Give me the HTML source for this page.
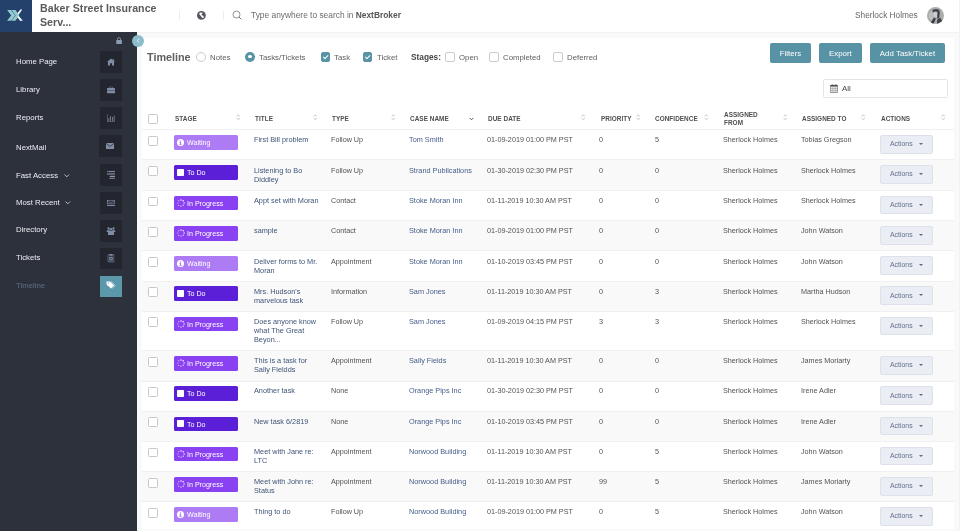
<!DOCTYPE html>
<html><head><meta charset="utf-8">
<style>
*{box-sizing:border-box;margin:0;padding:0}
html,body{width:960px;height:531px;overflow:hidden;background:#f9f9f9;font-family:"Liberation Sans",sans-serif;position:relative}
.abs{position:absolute}
.c,.nav,.lbl,.th,.btn,#brand,#search,#user,#tl,.badge span,.act span,#allbox span{will-change:transform}
#hdr{position:absolute;left:0;top:0;width:960px;height:33px;background:#fff;border-bottom:1px solid #f1f1f1}
#logo{position:absolute;left:0;top:0;width:32px;height:32px;background:#23416b}
#brand{position:absolute;left:40px;top:1.3px;font-weight:bold;font-size:10.6px;line-height:14px;color:#5a5a5a;letter-spacing:0.05px}
.sep{position:absolute;top:11px;width:1px;height:9px;background:#ededed}
#search{position:absolute;left:251px;top:10px;font-size:8.4px;color:#6b6b6b;line-height:11px}
#search b{color:#555}
#user{position:absolute;left:854.5px;top:10px;font-size:8.3px;color:#666;line-height:11px}
#avatar{position:absolute;left:926.9px;top:6.5px;width:17.4px;height:17.4px;border-radius:50%;overflow:hidden}
#avatar svg{display:block}
#side{position:absolute;left:0;top:32px;width:137px;height:499px;background:#2d313c}
.nav{position:absolute;left:15.6px;font-size:7.8px;color:#eceef2;line-height:10px}
.ibox{position:absolute;left:100px;width:22.2px;height:21.8px;background:#23262e}
.ibox svg{position:absolute;left:50%;top:50%;transform:translate(-50%,-50%)}
#card{position:absolute;left:142px;top:38px;width:812px;height:491px;background:#fff}
#tl{position:absolute;left:147px;top:50.8px;font-weight:bold;font-size:10.8px;color:#606060;line-height:13px}
.lbl{position:absolute;top:53px;font-size:7.8px;color:#5e5e5e;line-height:9px}
.radio{position:absolute;top:51.8px;width:10px;height:10px;border-radius:50%;border:0.8px solid #c9ccd1;background:#fff}
.radio.on{border:none;background:#5893a6}
.radio.on:after{content:"";position:absolute;left:3.3px;top:3.3px;width:3.4px;height:3.4px;border-radius:50%;background:#fff}
.chk{position:absolute;top:52px;width:9.6px;height:9.6px;border-radius:2px;border:0.8px solid #c9ccd1;background:#fff}
.chk.on{background:#5893a6;border-color:#5893a6}
.chk.on:after{content:"";position:absolute;left:2.6px;top:1.2px;width:2.2px;height:4.4px;border-right:1.3px solid #fff;border-bottom:1.3px solid #fff;transform:rotate(45deg)}
.btn{position:absolute;top:43.1px;height:19.6px;background:#5793a5;border-radius:2px;color:#fff;font-size:7.9px;line-height:21.6px;text-align:center}
#allbox{position:absolute;left:822.7px;top:79.3px;width:125.6px;height:19.1px;border:0.7px solid #e2e4e8;border-radius:1.5px;background:#fff}
#allbox span{position:absolute;left:18.8px;top:3.6px;font-size:7.9px;color:#444;line-height:9px}
.th{position:absolute;font-weight:bold;font-size:6.4px;letter-spacing:0.05px;color:#4e4e4e;line-height:8.4px}
.sort{position:absolute;top:114px}
#thline{position:absolute;left:142px;top:129px;width:812px;height:1px;background:#ebebeb}
.row{position:absolute;left:142px;width:812px;border-top:1px solid #f0f0f0}
.row .cb{position:absolute}
.cb{position:absolute;width:9.8px;height:9.8px;border:0.8px solid #c5c8cd;border-radius:1.5px;background:#fff}
.row .cb{left:6px !important}
.badge{position:absolute;left:32px;top:4.9px;width:64px;height:14.6px;border-radius:1.6px;color:#fff;font-size:7.1px;line-height:14.6px}
.badge svg{position:absolute;left:2.8px;top:3.8px}
.badge span{position:absolute;left:13.2px;top:0.9px}
.c{position:absolute;top:calc(5.6px + var(--dy));font-size:7.3px;line-height:9px;white-space:nowrap}
.title{color:#3e5478;top:calc(5.2px + var(--dy))}
.link{color:#445d8a;top:calc(5.2px + var(--dy))}
.typ{color:#525252;font-size:7.22px;top:calc(5.2px + var(--dy))}
.act{position:absolute;left:738px;top:4.8px;width:52.7px;height:18.6px;background:#eaedf4;border:0.8px solid #dde2ea;border-radius:2px}
.act span{position:absolute;left:8.5px;top:3.3px;font-size:6.9px;line-height:9px;color:#62718b}
.act i{position:absolute;left:37.8px;top:7px;width:0;height:0;border-left:2px solid transparent;border-right:2px solid transparent;border-top:2px solid #5a6a85}
</style></head><body>
<div id="hdr"></div>
<div id="logo"><svg width="32" height="32" viewBox="0 0 32 32">
<path d="M7.2 10.1 L11.2 10.1 L15.2 15.4 L11 20.7 L7 20.7 L11.2 15.4 Z" fill="#93c9d0"/>
<path d="M11.7 10.1 L15.5 10.1 L19.3 15.4 L15.3 20.7 L11.4 20.7 L15.6 15.4 Z" fill="#93c9d0"/>
<path d="M17.3 13.6 L20.4 9.6 L22.2 9.6 L18.6 14.8 Z" fill="#ffffff"/>
<path d="M17.4 17 L18.6 15.7 L22.8 20.7 L20 20.7 Z" fill="#ffffff"/>
</svg></div>
<div id="brand">Baker Street Insurance<br>Serv...</div>
<div class="sep" style="left:178.5px"></div>
<svg class="abs" style="left:196.9px;top:10.8px" width="8.8" height="8.8" viewBox="0 0 18 18"><circle cx="9" cy="9" r="9" fill="#55585e"/><path d="M4.6 4.2 Q8 2.2 11.6 3.8 L10 6.2 Q8.6 7.4 9.4 8.4 L13.2 10.2 Q15 12.6 12.6 14.8 L10.2 13.2 Q8 11.4 7.6 9.8 Q4.6 8.2 4.6 4.2 Z" fill="#fff"/></svg>
<div class="sep" style="left:222.5px"></div>
<svg class="abs" style="left:232.3px;top:10.3px" width="10.5" height="10.5" viewBox="0 0 21 21"><circle cx="9" cy="9" r="7" stroke="#6d7077" stroke-width="1.5" fill="none"/><path d="M14 14 L18.5 18.5" stroke="#6d7077" stroke-width="2"/></svg>
<div id="search">Type anywhere to search in <b>NextBroker</b></div>
<div id="user">Sherlock Holmes</div>
<div id="avatar"><svg width="17.4" height="17.4" viewBox="0 0 18 18"><rect width="18" height="18" fill="#acacac"/><path d="M2 7 Q4 3 8 2 L9 8 Q6 10 5 14 L2 12 Z" fill="#bdbdbd"/><path d="M5.5 3.2 Q9 1.2 12.8 3 L13.2 7.5 Q11.5 5.2 9.8 4.8 Q7.5 4.6 6.2 6.2 Z" fill="#40444c"/><path d="M6.8 6 Q8.5 4.8 10.4 5.6 L10.6 9.8 Q9 11.2 7.6 9.8 Z" fill="#cfcfcf"/><path d="M11 5.2 L13.2 6 L12.6 11.5 L10.8 12.4 L10.6 9.4 Z" fill="#3a3e46"/><path d="M3.5 16.5 L7.2 11.2 L9.2 12 L6.5 18 L3.5 18 Z" fill="#363a42"/><path d="M10.5 13.2 L13.5 11.2 L16.2 14.8 L12.5 18 L10.2 18 Z" fill="#3f434b"/></svg></div>

<div id="side">
</div>
<div class="nav" style="top:57px">Home Page</div>
<div class="nav" style="top:84.5px">Library</div>
<div class="nav" style="top:112.5px">Reports</div>
<div class="nav" style="top:142.8px">NextMail</div>
<div class="nav" style="top:170.5px">Fast Access</div><svg class="abs" style="left:64.2px;top:173.6px" width="5.5" height="3.6" viewBox="0 0 11 7"><path d="M1 1 L5.5 5.5 L10 1" stroke="#dfe2e8" stroke-width="1.6" fill="none"/></svg>
<div class="nav" style="top:198px">Most Recent</div><svg class="abs" style="left:65.4px;top:201.2px" width="5.5" height="3.6" viewBox="0 0 11 7"><path d="M1 1 L5.5 5.5 L10 1" stroke="#dfe2e8" stroke-width="1.6" fill="none"/></svg>
<div class="nav" style="top:225px">Directory</div>
<div class="nav" style="top:253px">Tickets</div>
<div class="nav" style="top:281px;color:#5f6e86">Timeline</div>
<div class="ibox" style="top:51.2px"><svg width="9" height="8" viewBox="0 0 18 16"><path d="M9 1 L17 8 L15 8 L15 15 L11 15 L11 10.5 L7 10.5 L7 15 L3 15 L3 8 L1 8 Z" fill="#7f8ca4"/><rect x="12.5" y="2" width="2" height="4" fill="#7f8ca4"/></svg></div>
<div class="ibox" style="top:79px"><svg width="9" height="7" viewBox="0 0 18 14"><rect x="1" y="3" width="16" height="11" rx="1.5" fill="#7f8ca4"/><rect x="6" y="0.5" width="6" height="3.5" rx="1" fill="none" stroke="#7f8ca4" stroke-width="1.2"/><rect x="1" y="7.5" width="16" height="0.8" fill="#23262e"/></svg></div>
<div class="ibox" style="top:107.2px"><svg width="9" height="8" viewBox="0 0 18 16"><rect x="1" y="1" width="1" height="14" fill="#7f8ca4"/><rect x="1" y="14" width="16" height="1" fill="#7f8ca4"/><rect x="4" y="8" width="1.6" height="6" fill="#7f8ca4"/><rect x="7.5" y="4" width="1.6" height="10" fill="#7f8ca4"/><rect x="11" y="6" width="1.6" height="8" fill="#7f8ca4"/><rect x="14.5" y="3" width="1.6" height="11" fill="#7f8ca4"/></svg></div>
<div class="ibox" style="top:135px;left:99.4px"><svg width="9" height="7" viewBox="0 0 18 14"><rect x="1" y="1" width="16" height="12" rx="1" fill="#7f8ca4"/><path d="M1.5 2 L9 8 L16.5 2" stroke="#23262e" stroke-width="1.4" fill="none"/></svg></div>
<div class="ibox" style="top:164px"><svg width="8" height="8.4" viewBox="0 0 16 17"><rect x="0" y="0" width="1.6" height="2.6" fill="#7f8ca4"/><rect x="2.6" y="0" width="13.4" height="2.6" fill="#7f8ca4"/><rect x="0" y="5.2" width="16" height="2.4" fill="#7f8ca4"/><rect x="5.6" y="10.2" width="10.4" height="2" fill="#9fb4d8"/><rect x="4.6" y="14.2" width="11.4" height="2" fill="#a9a793"/></svg></div>
<div class="ibox" style="top:192px"><svg width="8" height="6.2" viewBox="0 0 16 12.4"><rect x="0.7" y="0.7" width="14.6" height="7.2" fill="none" stroke="#7f8ca4" stroke-width="1.4"/><path d="M1 2 L8 6 L15 2" stroke="#7f8ca4" stroke-width="1.2" fill="none"/><rect x="0" y="10.2" width="16" height="2" fill="#7f8ca4"/></svg></div>
<div class="ibox" style="top:220px"><svg width="10" height="9" viewBox="0 0 20 18"><circle cx="5" cy="4" r="2.3" fill="#7f8ca4"/><circle cx="15" cy="4" r="2.3" fill="#7f8ca4"/><circle cx="10" cy="5.5" r="2.6" fill="#7f8ca4"/><path d="M1 11 Q1 7 5 7 Q8 7 8 9 L12 9 Q12 7 15 7 Q19 7 19 11 Z" fill="#7f8ca4"/><rect x="4" y="10" width="12" height="7" rx="1" fill="#7f8ca4"/></svg></div>
<div class="ibox" style="top:247.5px"><svg width="7.2" height="8.6" viewBox="0 0 14 17"><rect x="0.8" y="2.2" width="12.4" height="14" rx="1" fill="none" stroke="#7f8ca4" stroke-width="1.6"/><rect x="4" y="0.5" width="6" height="3.4" rx="0.8" fill="#7f8ca4"/><rect x="3.5" y="6" width="7" height="7.5" fill="#7f8ca4"/><rect x="5" y="8" width="4" height="3.5" fill="#50586a"/></svg></div>
<div class="ibox" style="top:275.5px;background:#5b98aa"><svg width="10" height="8" viewBox="0 0 20 16" style="margin-top:-1px"><path d="M1 1 L8 1 L16 9 L10 15 L1 7 Z" fill="#fff"/><circle cx="4.5" cy="4.2" r="1.3" fill="#5b98aa"/><path d="M10 1 L18.5 9 L12.5 15" stroke="#fff" stroke-width="1.2" fill="none"/></svg></div>
<svg class="abs" style="left:115.8px;top:36.8px" width="6.2" height="7.4" viewBox="0 0 12 14.4"><rect x="0.5" y="6" width="11" height="8" rx="0.8" fill="#8a99b6"/><path d="M3 6.2 V4.2 A3 3 0 0 1 9 4.2 V6.2" stroke="#9aa3b3" stroke-width="1.5" fill="none"/></svg>

<div id="card"></div>
<div class="abs" style="left:131.8px;top:34.9px;width:12.2px;height:12.2px;border-radius:50%;background:#8bbdcb"></div>
<svg class="abs" style="left:135.6px;top:38.4px" width="4.4" height="5.2" viewBox="0 0 8.8 10.4"><path d="M6.6 1.2 L2.4 5.2 L6.6 9.2" stroke="#eef5f7" stroke-width="1.8" fill="none"/></svg>
<div id="tl">Timeline</div>
<div class="radio" style="left:196px"></div><div class="lbl" style="left:210.3px">Notes</div>
<div class="radio on" style="left:245px"></div><div class="lbl" style="left:259.3px">Tasks/Tickets</div>
<div class="chk on" style="left:320.5px"></div><div class="lbl" style="left:334.3px">Task</div>
<div class="chk on" style="left:362.7px"></div><div class="lbl" style="left:376.7px">Ticket</div>
<div class="lbl" style="left:410.7px;top:52.6px;font-weight:bold;font-size:8.3px;color:#484848">Stages:</div>
<div class="chk" style="left:445px"></div><div class="lbl" style="left:458.7px">Open</div>
<div class="chk" style="left:489.3px"></div><div class="lbl" style="left:503.3px">Completed</div>
<div class="chk" style="left:553.3px"></div><div class="lbl" style="left:567.3px">Deferred</div>
<div class="btn" style="left:770px;width:40.8px">Filters</div>
<div class="btn" style="left:819.3px;width:42.7px">Export</div>
<div class="btn" style="left:870px;width:75px">Add Task/Ticket</div>
<div id="allbox"><svg class="abs" style="left:6.8px;top:4px" width="8" height="9" viewBox="0 0 16 18"><rect x="0.7" y="2.6" width="14.6" height="14.6" rx="1" fill="none" stroke="#3a3a40" stroke-width="1.1"/><rect x="0.7" y="2.4" width="14.6" height="2.6" fill="#3a3a40"/><path d="M4.4 5v12M8 5v12M11.6 5v12M1 8.8h14M1 12.8h14" stroke="#55555c" stroke-width="0.7"/><rect x="3.6" y="0.8" width="1.6" height="2.6" fill="#3a3a40"/><rect x="10.8" y="0.8" width="1.6" height="2.6" fill="#3a3a40"/></svg><span>All</span></div>

<div class="cb" style="left:148px;top:114px"></div>
<div class="th" style="left:175.4px;top:115px">STAGE</div><svg class="sort" style="left:235.9px" width="4.6" height="6.6" viewBox="0 0 10 14"><path d="M1.5 5.5 L5 1.5 L8.5 5.5" stroke="#aeb3ba" stroke-width="1.5" fill="none"/><path d="M1.5 8.5 L5 12.5 L8.5 8.5" stroke="#aeb3ba" stroke-width="1.5" fill="none"/></svg>
<div class="th" style="left:255px;top:115px">TITLE</div><svg class="sort" style="left:312.9px" width="4.6" height="6.6" viewBox="0 0 10 14"><path d="M1.5 5.5 L5 1.5 L8.5 5.5" stroke="#aeb3ba" stroke-width="1.5" fill="none"/><path d="M1.5 8.5 L5 12.5 L8.5 8.5" stroke="#aeb3ba" stroke-width="1.5" fill="none"/></svg>
<div class="th" style="left:332.2px;top:115px">TYPE</div><svg class="sort" style="left:390.9px" width="4.6" height="6.6" viewBox="0 0 10 14"><path d="M1.5 5.5 L5 1.5 L8.5 5.5" stroke="#aeb3ba" stroke-width="1.5" fill="none"/><path d="M1.5 8.5 L5 12.5 L8.5 8.5" stroke="#aeb3ba" stroke-width="1.5" fill="none"/></svg>
<div class="th" style="left:410px;top:115px">CASE NAME</div>
<svg class="abs" style="left:469px;top:116.6px" width="5" height="4" viewBox="0 0 10 8"><path d="M1.5 2 L5 5.5 L8.5 2" stroke="#4a4a4a" stroke-width="1.9" fill="none"/></svg>
<div class="th" style="left:487.9px;top:115px">DUE DATE</div><svg class="sort" style="left:580.9px" width="4.6" height="6.6" viewBox="0 0 10 14"><path d="M1.5 5.5 L5 1.5 L8.5 5.5" stroke="#aeb3ba" stroke-width="1.5" fill="none"/><path d="M1.5 8.5 L5 12.5 L8.5 8.5" stroke="#aeb3ba" stroke-width="1.5" fill="none"/></svg>
<div class="th" style="left:600.6px;top:115px">PRIORITY</div><svg class="sort" style="left:635.9px" width="4.6" height="6.6" viewBox="0 0 10 14"><path d="M1.5 5.5 L5 1.5 L8.5 5.5" stroke="#aeb3ba" stroke-width="1.5" fill="none"/><path d="M1.5 8.5 L5 12.5 L8.5 8.5" stroke="#aeb3ba" stroke-width="1.5" fill="none"/></svg>
<div class="th" style="left:655.4px;top:115px">CONFIDENCE</div><svg class="sort" style="left:703.9px" width="4.6" height="6.6" viewBox="0 0 10 14"><path d="M1.5 5.5 L5 1.5 L8.5 5.5" stroke="#aeb3ba" stroke-width="1.5" fill="none"/><path d="M1.5 8.5 L5 12.5 L8.5 8.5" stroke="#aeb3ba" stroke-width="1.5" fill="none"/></svg>
<div class="th" style="left:723.5px;top:111px">ASSIGNED<br>FROM</div><svg class="sort" style="left:782.9px" width="4.6" height="6.6" viewBox="0 0 10 14"><path d="M1.5 5.5 L5 1.5 L8.5 5.5" stroke="#aeb3ba" stroke-width="1.5" fill="none"/><path d="M1.5 8.5 L5 12.5 L8.5 8.5" stroke="#aeb3ba" stroke-width="1.5" fill="none"/></svg>
<div class="th" style="left:802px;top:115px">ASSIGNED TO</div><svg class="sort" style="left:861.4px" width="4.6" height="6.6" viewBox="0 0 10 14"><path d="M1.5 5.5 L5 1.5 L8.5 5.5" stroke="#aeb3ba" stroke-width="1.5" fill="none"/><path d="M1.5 8.5 L5 12.5 L8.5 8.5" stroke="#aeb3ba" stroke-width="1.5" fill="none"/></svg>
<div class="th" style="left:880.8px;top:115px">ACTIONS</div><svg class="sort" style="left:940.9px" width="4.6" height="6.6" viewBox="0 0 10 14"><path d="M1.5 5.5 L5 1.5 L8.5 5.5" stroke="#aeb3ba" stroke-width="1.5" fill="none"/><path d="M1.5 8.5 L5 12.5 L8.5 8.5" stroke="#aeb3ba" stroke-width="1.5" fill="none"/></svg>
<div id="thline"></div>
<div class="row" style="top:129.3px;height:30.099999999999994px;background:#ffffff;--dy:0px">
<div class="cb" style="left:148px;top:5.6px"></div>
<div class="badge" style="background:#ad7cf5"><svg width="7" height="7" viewBox="0 0 14 14"><circle cx="7" cy="7" r="7" fill="#fff"/><rect x="5.8" y="5.6" width="2.4" height="5.6" fill="#ad7cf5"/><circle cx="7" cy="3.6" r="1.3" fill="#ad7cf5"/><rect x="4.6" y="10" width="4.8" height="1.4" fill="#ad7cf5"/><rect x="4.6" y="5.6" width="2.8" height="1.2" fill="#ad7cf5"/></svg><span>Waiting</span></div>
<div class="c title" style="left:112px">First Bill problem</div>
<div class="c typ" style="left:189px">Follow Up</div>
<div class="c link" style="left:267px">Tom Smith</div>
<div class="c typ" style="left:345px">01-09-2019 01:00 PM PST</div>
<div class="c typ" style="left:457px">0</div>
<div class="c typ" style="left:513px">5</div>
<div class="c typ" style="left:580.5px">Sherlock Holmes</div>
<div class="c typ" style="left:659px">Tobias Gregson</div>
<div class="act"><span>Actions</span><i></i></div>
</div><div class="row" style="top:159.4px;height:30.599999999999994px;background:#f9f9f9;--dy:0px">
<div class="cb" style="left:148px;top:5.6px"></div>
<div class="badge" style="background:#5b1fd7"><svg width="7" height="7" viewBox="0 0 14 14"><rect x="0" y="0" width="14" height="14" rx="1.5" fill="#fff"/></svg><span>To Do</span></div>
<div class="c title" style="left:112px">Listening to Bo<br>Diddley</div>
<div class="c typ" style="left:189px">Follow Up</div>
<div class="c link" style="left:267px">Strand Publications</div>
<div class="c typ" style="left:345px">01-30-2019 02:30 PM PST</div>
<div class="c typ" style="left:457px">0</div>
<div class="c typ" style="left:513px">0</div>
<div class="c typ" style="left:580.5px">Sherlock Holmes</div>
<div class="c typ" style="left:659px">Sherlock Holmes</div>
<div class="act"><span>Actions</span><i></i></div>
</div><div class="row" style="top:190.0px;height:30.19999999999999px;background:#ffffff;--dy:0px">
<div class="cb" style="left:148px;top:5.6px"></div>
<div class="badge" style="background:#8a41f2"><svg width="8" height="8" viewBox="0 0 16 16" fill="#fff" style="top:3.2px;left:2.9px"><circle cx="8" cy="1.8" r="1.55"/><circle cx="12.4" cy="3.6" r="1.45"/><circle cx="14.2" cy="8" r="1.3"/><circle cx="12.4" cy="12.4" r="1.2"/><circle cx="8" cy="14.2" r="1.1"/><circle cx="3.6" cy="12.4" r="1.05"/><circle cx="1.8" cy="8" r="1"/><circle cx="3.6" cy="3.6" r="1.05"/></svg><span>In Progress</span></div>
<div class="c title" style="left:112px">Appt set with Moran</div>
<div class="c typ" style="left:189px">Contact</div>
<div class="c link" style="left:267px">Stoke Moran Inn</div>
<div class="c typ" style="left:345px">01-11-2019 10:30 AM PST</div>
<div class="c typ" style="left:457px">0</div>
<div class="c typ" style="left:513px">0</div>
<div class="c typ" style="left:580.5px">Sherlock Holmes</div>
<div class="c typ" style="left:659px">Sherlock Holmes</div>
<div class="act"><span>Actions</span><i></i></div>
</div><div class="row" style="top:220.2px;height:30.200000000000017px;background:#f9f9f9;--dy:0px">
<div class="cb" style="left:148px;top:5.6px"></div>
<div class="badge" style="background:#8a41f2"><svg width="8" height="8" viewBox="0 0 16 16" fill="#fff" style="top:3.2px;left:2.9px"><circle cx="8" cy="1.8" r="1.55"/><circle cx="12.4" cy="3.6" r="1.45"/><circle cx="14.2" cy="8" r="1.3"/><circle cx="12.4" cy="12.4" r="1.2"/><circle cx="8" cy="14.2" r="1.1"/><circle cx="3.6" cy="12.4" r="1.05"/><circle cx="1.8" cy="8" r="1"/><circle cx="3.6" cy="3.6" r="1.05"/></svg><span>In Progress</span></div>
<div class="c title" style="left:112px">sample</div>
<div class="c typ" style="left:189px">Contact</div>
<div class="c link" style="left:267px">Stoke Moran Inn</div>
<div class="c typ" style="left:345px">01-09-2019 01:00 PM PST</div>
<div class="c typ" style="left:457px">0</div>
<div class="c typ" style="left:513px">0</div>
<div class="c typ" style="left:580.5px">Sherlock Holmes</div>
<div class="c typ" style="left:659px">John Watson</div>
<div class="act"><span>Actions</span><i></i></div>
</div><div class="row" style="top:250.4px;height:30.200000000000017px;background:#ffffff;--dy:0px">
<div class="cb" style="left:148px;top:5.6px"></div>
<div class="badge" style="background:#ad7cf5"><svg width="7" height="7" viewBox="0 0 14 14"><circle cx="7" cy="7" r="7" fill="#fff"/><rect x="5.8" y="5.6" width="2.4" height="5.6" fill="#ad7cf5"/><circle cx="7" cy="3.6" r="1.3" fill="#ad7cf5"/><rect x="4.6" y="10" width="4.8" height="1.4" fill="#ad7cf5"/><rect x="4.6" y="5.6" width="2.8" height="1.2" fill="#ad7cf5"/></svg><span>Waiting</span></div>
<div class="c title" style="left:112px">Deliver forms to Mr.<br>Moran</div>
<div class="c typ" style="left:189px">Appointment</div>
<div class="c link" style="left:267px">Stoke Moran Inn</div>
<div class="c typ" style="left:345px">01-10-2019 03:45 PM PST</div>
<div class="c typ" style="left:457px">0</div>
<div class="c typ" style="left:513px">0</div>
<div class="c typ" style="left:580.5px">Sherlock Holmes</div>
<div class="c typ" style="left:659px">John Watson</div>
<div class="act"><span>Actions</span><i></i></div>
</div><div class="row" style="top:280.6px;height:30.19999999999999px;background:#f9f9f9;--dy:0px">
<div class="cb" style="left:148px;top:5.6px"></div>
<div class="badge" style="background:#5b1fd7"><svg width="7" height="7" viewBox="0 0 14 14"><rect x="0" y="0" width="14" height="14" rx="1.5" fill="#fff"/></svg><span>To Do</span></div>
<div class="c title" style="left:112px">Mrs. Hudson's<br>marvelous task</div>
<div class="c typ" style="left:189px">Information</div>
<div class="c link" style="left:267px">Sam Jones</div>
<div class="c typ" style="left:345px">01-11-2019 10:30 AM PST</div>
<div class="c typ" style="left:457px">0</div>
<div class="c typ" style="left:513px">3</div>
<div class="c typ" style="left:580.5px">Sherlock Holmes</div>
<div class="c typ" style="left:659px">Martha Hudson</div>
<div class="act"><span>Actions</span><i></i></div>
</div><div class="row" style="top:310.8px;height:39.599999999999966px;background:#ffffff;--dy:0px">
<div class="cb" style="left:148px;top:5.6px"></div>
<div class="badge" style="background:#8a41f2"><svg width="8" height="8" viewBox="0 0 16 16" fill="#fff" style="top:3.2px;left:2.9px"><circle cx="8" cy="1.8" r="1.55"/><circle cx="12.4" cy="3.6" r="1.45"/><circle cx="14.2" cy="8" r="1.3"/><circle cx="12.4" cy="12.4" r="1.2"/><circle cx="8" cy="14.2" r="1.1"/><circle cx="3.6" cy="12.4" r="1.05"/><circle cx="1.8" cy="8" r="1"/><circle cx="3.6" cy="3.6" r="1.05"/></svg><span>In Progress</span></div>
<div class="c title" style="left:112px">Does anyone know<br>what The Great<br>Beyon...</div>
<div class="c typ" style="left:189px">Follow Up</div>
<div class="c link" style="left:267px">Sam Jones</div>
<div class="c typ" style="left:345px">01-09-2019 04:15 PM PST</div>
<div class="c typ" style="left:457px">3</div>
<div class="c typ" style="left:513px">3</div>
<div class="c typ" style="left:580.5px">Sherlock Holmes</div>
<div class="c typ" style="left:659px">Sherlock Holmes</div>
<div class="act"><span>Actions</span><i></i></div>
</div><div class="row" style="top:350.4px;height:30.200000000000045px;background:#f9f9f9;--dy:-1px">
<div class="cb" style="left:148px;top:5.6px"></div>
<div class="badge" style="background:#8a41f2"><svg width="8" height="8" viewBox="0 0 16 16" fill="#fff" style="top:3.2px;left:2.9px"><circle cx="8" cy="1.8" r="1.55"/><circle cx="12.4" cy="3.6" r="1.45"/><circle cx="14.2" cy="8" r="1.3"/><circle cx="12.4" cy="12.4" r="1.2"/><circle cx="8" cy="14.2" r="1.1"/><circle cx="3.6" cy="12.4" r="1.05"/><circle cx="1.8" cy="8" r="1"/><circle cx="3.6" cy="3.6" r="1.05"/></svg><span>In Progress</span></div>
<div class="c title" style="left:112px">This is a task for<br>Sally Fieldds</div>
<div class="c typ" style="left:189px">Appointment</div>
<div class="c link" style="left:267px">Sally Fields</div>
<div class="c typ" style="left:345px">01-11-2019 10:30 AM PST</div>
<div class="c typ" style="left:457px">0</div>
<div class="c typ" style="left:513px">0</div>
<div class="c typ" style="left:580.5px">Sherlock Holmes</div>
<div class="c typ" style="left:659px">James Moriarty</div>
<div class="act"><span>Actions</span><i></i></div>
</div><div class="row" style="top:380.6px;height:30.19999999999999px;background:#ffffff;--dy:-0.6px">
<div class="cb" style="left:148px;top:5.6px"></div>
<div class="badge" style="background:#5b1fd7"><svg width="7" height="7" viewBox="0 0 14 14"><rect x="0" y="0" width="14" height="14" rx="1.5" fill="#fff"/></svg><span>To Do</span></div>
<div class="c title" style="left:112px">Another task</div>
<div class="c typ" style="left:189px">None</div>
<div class="c link" style="left:267px">Orange Pips Inc</div>
<div class="c typ" style="left:345px">01-30-2019 02:30 PM PST</div>
<div class="c typ" style="left:457px">0</div>
<div class="c typ" style="left:513px">0</div>
<div class="c typ" style="left:580.5px">Sherlock Holmes</div>
<div class="c typ" style="left:659px">Irene Adler</div>
<div class="act"><span>Actions</span><i></i></div>
</div><div class="row" style="top:410.8px;height:30.19999999999999px;background:#f9f9f9;--dy:0px">
<div class="cb" style="left:148px;top:5.6px"></div>
<div class="badge" style="background:#5b1fd7"><svg width="7" height="7" viewBox="0 0 14 14"><rect x="0" y="0" width="14" height="14" rx="1.5" fill="#fff"/></svg><span>To Do</span></div>
<div class="c title" style="left:112px">New task 6/2819</div>
<div class="c typ" style="left:189px">None</div>
<div class="c link" style="left:267px">Orange Pips Inc</div>
<div class="c typ" style="left:345px">01-10-2019 03:45 PM PST</div>
<div class="c typ" style="left:457px">0</div>
<div class="c typ" style="left:513px">0</div>
<div class="c typ" style="left:580.5px">Sherlock Holmes</div>
<div class="c typ" style="left:659px">Irene Adler</div>
<div class="act"><span>Actions</span><i></i></div>
</div><div class="row" style="top:441.0px;height:30.19999999999999px;background:#ffffff;--dy:-0.6px">
<div class="cb" style="left:148px;top:5.6px"></div>
<div class="badge" style="background:#8a41f2"><svg width="8" height="8" viewBox="0 0 16 16" fill="#fff" style="top:3.2px;left:2.9px"><circle cx="8" cy="1.8" r="1.55"/><circle cx="12.4" cy="3.6" r="1.45"/><circle cx="14.2" cy="8" r="1.3"/><circle cx="12.4" cy="12.4" r="1.2"/><circle cx="8" cy="14.2" r="1.1"/><circle cx="3.6" cy="12.4" r="1.05"/><circle cx="1.8" cy="8" r="1"/><circle cx="3.6" cy="3.6" r="1.05"/></svg><span>In Progress</span></div>
<div class="c title" style="left:112px">Meet with Jane re:<br>LTC</div>
<div class="c typ" style="left:189px">Appointment</div>
<div class="c link" style="left:267px">Norwood Building</div>
<div class="c typ" style="left:345px">01-11-2019 10:30 AM PST</div>
<div class="c typ" style="left:457px">0</div>
<div class="c typ" style="left:513px">5</div>
<div class="c typ" style="left:580.5px">Sherlock Holmes</div>
<div class="c typ" style="left:659px">John Watson</div>
<div class="act"><span>Actions</span><i></i></div>
</div><div class="row" style="top:471.2px;height:30.19999999999999px;background:#f9f9f9;--dy:0px">
<div class="cb" style="left:148px;top:5.6px"></div>
<div class="badge" style="background:#8a41f2"><svg width="8" height="8" viewBox="0 0 16 16" fill="#fff" style="top:3.2px;left:2.9px"><circle cx="8" cy="1.8" r="1.55"/><circle cx="12.4" cy="3.6" r="1.45"/><circle cx="14.2" cy="8" r="1.3"/><circle cx="12.4" cy="12.4" r="1.2"/><circle cx="8" cy="14.2" r="1.1"/><circle cx="3.6" cy="12.4" r="1.05"/><circle cx="1.8" cy="8" r="1"/><circle cx="3.6" cy="3.6" r="1.05"/></svg><span>In Progress</span></div>
<div class="c title" style="left:112px">Meet with John re:<br>Status</div>
<div class="c typ" style="left:189px">Appointment</div>
<div class="c link" style="left:267px">Norwood Building</div>
<div class="c typ" style="left:345px">01-11-2019 10:30 AM PST</div>
<div class="c typ" style="left:457px">99</div>
<div class="c typ" style="left:513px">5</div>
<div class="c typ" style="left:580.5px">Sherlock Holmes</div>
<div class="c typ" style="left:659px">James Moriarty</div>
<div class="act"><span>Actions</span><i></i></div>
</div><div class="row" style="top:501.4px;height:27.600000000000023px;background:#ffffff;--dy:-0.8px">
<div class="cb" style="left:148px;top:5.6px"></div>
<div class="badge" style="background:#ad7cf5"><svg width="7" height="7" viewBox="0 0 14 14"><circle cx="7" cy="7" r="7" fill="#fff"/><rect x="5.8" y="5.6" width="2.4" height="5.6" fill="#ad7cf5"/><circle cx="7" cy="3.6" r="1.3" fill="#ad7cf5"/><rect x="4.6" y="10" width="4.8" height="1.4" fill="#ad7cf5"/><rect x="4.6" y="5.6" width="2.8" height="1.2" fill="#ad7cf5"/></svg><span>Waiting</span></div>
<div class="c title" style="left:112px">Thing to do</div>
<div class="c typ" style="left:189px">Follow Up</div>
<div class="c link" style="left:267px">Norwood Building</div>
<div class="c typ" style="left:345px">01-09-2019 01:00 PM PST</div>
<div class="c typ" style="left:457px">0</div>
<div class="c typ" style="left:513px">5</div>
<div class="c typ" style="left:580.5px">Sherlock Holmes</div>
<div class="c typ" style="left:659px">John Watson</div>
<div class="act"><span>Actions</span><i></i></div>
</div>
<div class="abs" style="left:959px;top:0;width:1px;height:531px;background:#f1f2f4"></div>
</body></html>
